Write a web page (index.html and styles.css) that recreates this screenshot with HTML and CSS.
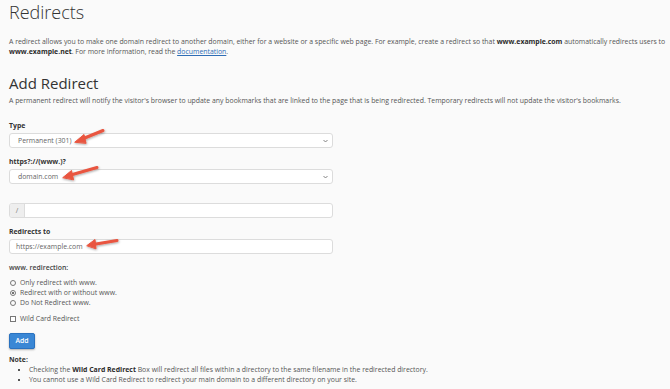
FILE: index.html
```html
<!DOCTYPE html>
<html lang="en">
  <head>
    <meta charset="utf-8" />
    <title>Redirects</title>
    <link rel="stylesheet" href="styles.css">
  </head>
  <body>
    <div class="page">
      <h1 class="title">Redirects</h1>
      <p class="intro">A redirect allows you to make one domain redirect to another domain, either for a website or a specific web page. For example, create a redirect so that <b>www.example.com</b> automatically redirects users to <b>www.example.net</b>. For more information, read the <a href="#docs">documentation</a>.</p>

      <h2 class="sub">Add Redirect</h2>
      <p class="intro note-top">A permanent redirect will notify the visitor's browser to update any bookmarks that are linked to the page that is being redirected. Temporary redirects will not update the visitor's bookmarks.</p>

      <div class="group first">
        <div class="label">Type</div>
        <div class="control select">
          <span>Permanent (301)</span>
          <svg class="chev" width="5" height="4" viewBox="0 0 5 4"><path d="M0.5 1 L2.5 3 L4.5 1" fill="none" stroke="#777" stroke-width="0.9"/></svg>
        </div>
      </div>

      <div class="group">
        <div class="label">https?://(www.)?</div>
        <div class="control select">
          <span>domain.com</span>
          <svg class="chev" width="5" height="4" viewBox="0 0 5 4"><path d="M0.5 1 L2.5 3 L4.5 1" fill="none" stroke="#777" stroke-width="0.9"/></svg>
        </div>
      </div>

      <div class="group path">
        <div class="control input-group">
          <span class="addon">/</span>
          <span class="field"></span>
        </div>
      </div>

      <div class="group">
        <div class="label">Redirects to</div>
        <div class="control text">https://example.com</div>
      </div>

      <div class="group">
        <div class="label light">www. redirection:</div>
        <ul class="radios">
          <li><span class="radio"></span>Only redirect with www.</li>
          <li><span class="radio on"></span>Redirect with or without www.</li>
          <li><span class="radio"></span>Do Not Redirect www.</li>
        </ul>
      </div>

      <div class="check-row"><span class="box"></span>Wild Card Redirect</div>

      <button class="btn">Add</button>

      <div class="notes">
        <div class="label">Note:</div>
        <ul>
          <li>Checking the <b>Wild Card Redirect</b> Box will redirect all files within a directory to the same filename in the redirected directory.</li>
          <li>You cannot use a Wild Card Redirect to redirect your main domain to a different directory on your site.</li>
        </ul>
      </div>

      <svg class="arrows" width="670" height="389" viewBox="0 0 670 389">
        <defs>
          <filter id="sh" x="-20%" y="-20%" width="140%" height="160%">
            <feDropShadow dx="0.5" dy="1" stdDeviation="0.8" flood-color="#000" flood-opacity="0.35"/>
          </filter>
        </defs>
        <g fill="#e9553f" stroke="#e9553f" stroke-linecap="round" stroke-linejoin="round" filter="url(#sh)">
          <line x1="103" y1="130.5" x2="81" y2="139.5" stroke-width="3"/>
          <polygon points="75,142 84,134.5 86,143" stroke-width="1"/>
          <line x1="97" y1="167.5" x2="69" y2="175.5" stroke-width="3"/>
          <polygon points="63,177.5 71.5,170.5 73.5,179.5" stroke-width="1"/>
          <line x1="117" y1="240.5" x2="93" y2="244.5" stroke-width="3"/>
          <polygon points="87,245.5 95,239.5 96,248.5" stroke-width="1"/>
        </g>
      </svg>
    </div>
  </body>
</html>
```

FILE: styles.css
```css
body{
  margin:0;
  background:#fafafa;
  color:#555;
  font:400 6.9px/10px 'Open Sans',sans-serif;
}
*,:after,:before{box-sizing:border-box}
a{color:#2f6db5;text-decoration:underline}
b{color:#2b2b2b;font-weight:700}

.page{
  position:relative;
  padding:1px 0 0 9px;
}
.title{
  margin:0;
  font-size:18px;
  line-height:22px;
  font-weight:300;
  color:#333;
}
.intro{
  margin:14px 0 0;
}
.sub{
  margin:16px 0 0;
  font-size:15px;
  line-height:20px;
  font-weight:400;
  color:#333;
}
.note-top{
  margin-top:3px;
}

.group{
  margin-top:9px;
  width:324px;
}
.group.first{margin-top:15px}
.group.path{margin-top:19px}
.label{
  font-weight:700;
  color:#333;
  margin-bottom:2px;
}
.label.light{
  font-weight:600;
  color:#444;
}
.control{
  height:15px;
  background:#fff;
  border:1px solid #dcdcdc;
  border-radius:3px;
  display:flex;
  align-items:center;
  color:#666;
}
.select{
  padding:0 4px 0 8px;
  justify-content:space-between;
}
.text{
  padding:0 6px;
}
.input-group{
  overflow:hidden;
}
.input-group .addon{
  width:15px;
  height:100%;
  background:#eee;
  border-right:1px solid #dcdcdc;
  display:flex;
  align-items:center;
  justify-content:center;
  color:#777;
}

.radios{
  list-style:none;
  margin:5px 0 0;
  padding:0;
}
.radios li{
  display:flex;
  align-items:center;
}
.radio{
  width:6px;
  height:6px;
  border:1px solid #777;
  border-radius:50%;
  margin:0 4px 0 1px;
  display:flex;
  align-items:center;
  justify-content:center;
}
.radio.on:after{
  content:'';
  width:2.4px;
  height:2.4px;
  border-radius:50%;
  background:#444;
}

.check-row{
  margin-top:6px;
  display:flex;
  align-items:center;
}
.check-row .box{
  width:6px;
  height:6px;
  border:1px solid #777;
  background:#fff;
  margin:0 4px 0 1px;
}

.btn{
  margin-top:9px;
  display:block;
  width:26px;
  height:16px;
  padding:0;
  border:1px solid #2a72c0;
  border-radius:2px;
  background:#3a87d5;
  color:#fff;
  font:600 6.9px/14px 'Open Sans',sans-serif;
  box-shadow:0 1px 2px rgba(0,0,0,.3);
}

.notes{
  margin-top:6px;
}
.notes .label{margin-bottom:0}
.notes ul{
  margin:0;
  padding:0 0 0 20px;
  list-style:square;
  line-height:9.5px;
}

.arrows{
  position:absolute;
  left:0;
  top:0;
  pointer-events:none;
}
```
